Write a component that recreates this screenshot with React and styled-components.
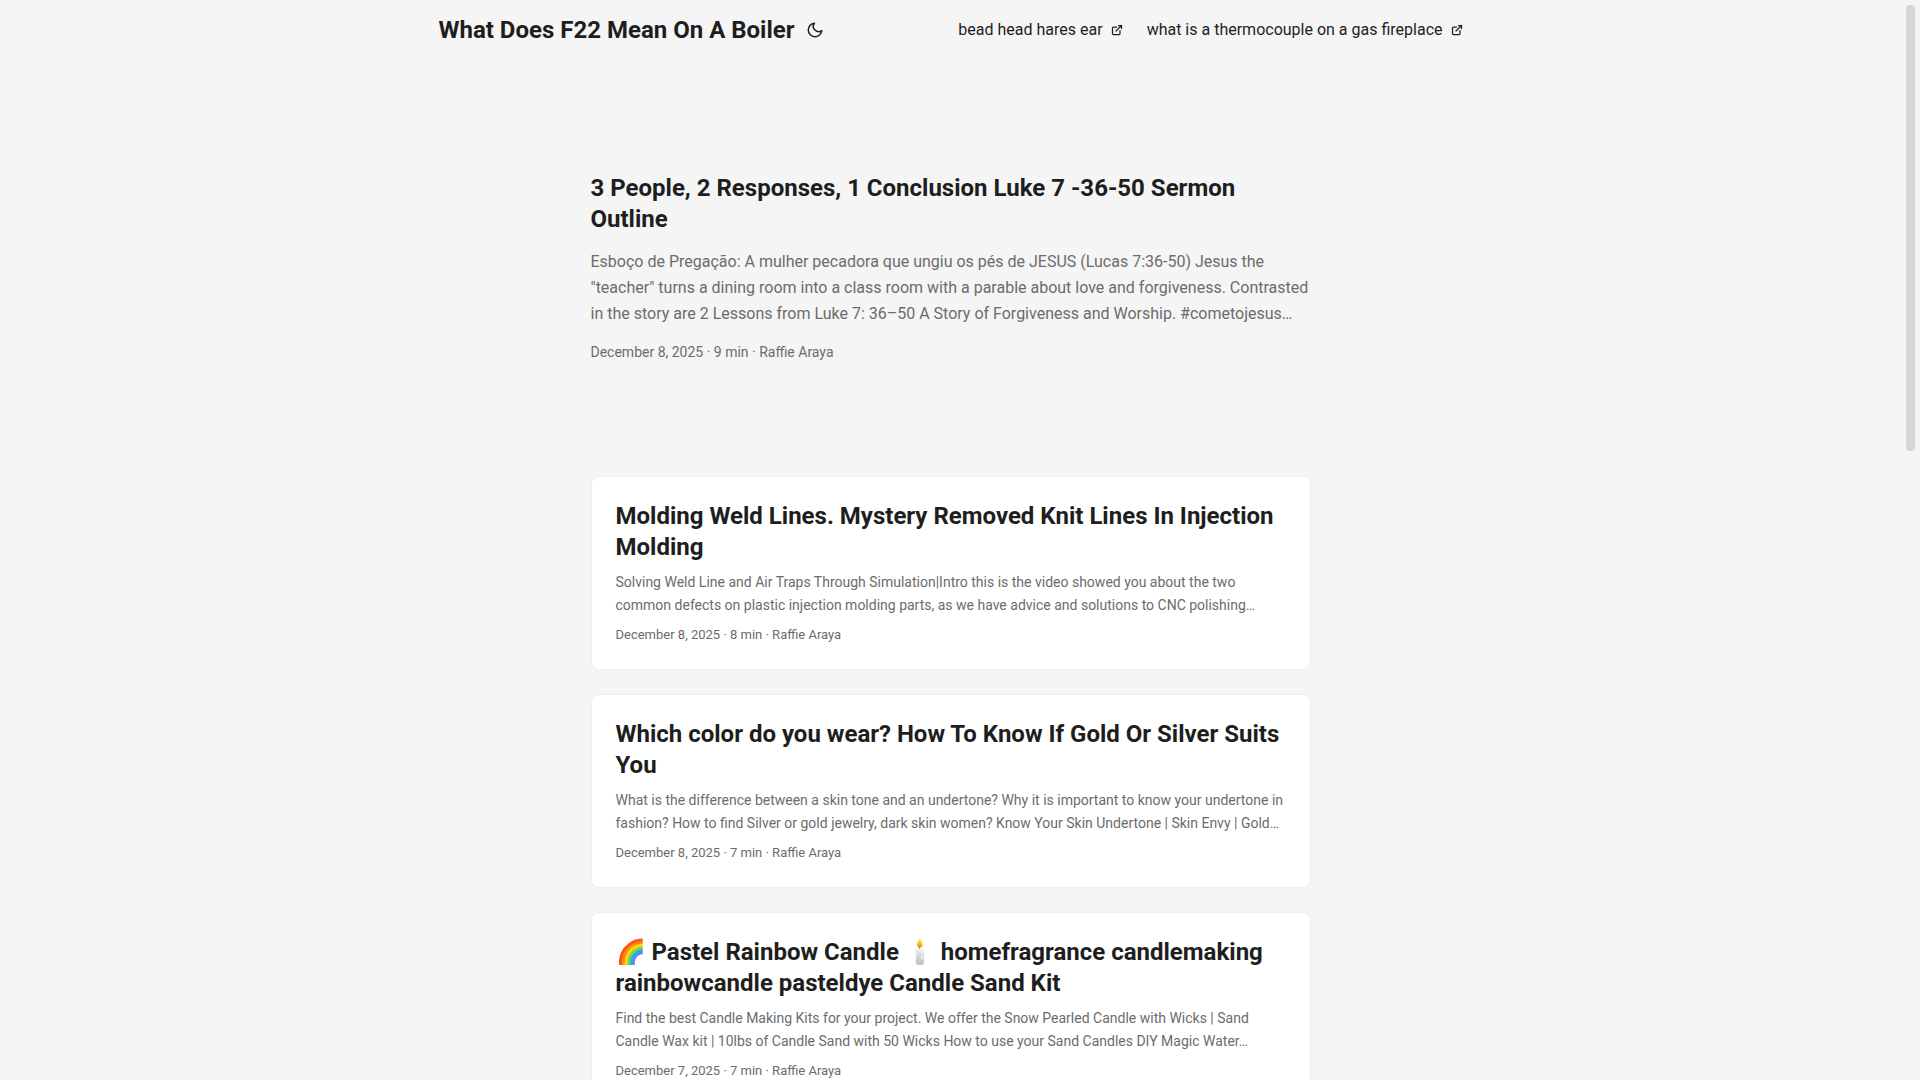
import React, { useState } from "react";
import styled, { createGlobalStyle } from "styled-components";

const menu = [
  { name: "bead head hares ear", url: "#bead-head-hares-ear" },
  {
    name: "what is a thermocouple on a gas fireplace",
    url: "#what-is-a-thermocouple",
  },
];

const featured = {
  title: "3 People, 2 Responses, 1 Conclusion Luke 7 -36-50 Sermon Outline",
  summary:
    'Esboço de Pregação: A mulher pecadora que ungiu os pés de JESUS (Lucas 7:36-50) Jesus the "teacher" turns a dining room into a class room with a parable about love and forgiveness. Contrasted in the story are 2 Lessons from Luke 7: 36–50 A Story of Forgiveness and Worship. #cometojesus…',
  meta: "December 8, 2025 · 9 min · Raffie Araya",
};

const posts = [
  {
    title:
      "Molding Weld Lines. Mystery Removed Knit Lines In Injection Molding",
    summary:
      "Solving Weld Line and Air Traps Through Simulation|Intro this is the video showed you about the two common defects on plastic injection molding parts, as we have advice and solutions to CNC polishing…",
    meta: "December 8, 2025 · 8 min · Raffie Araya",
  },
  {
    title: "Which color do you wear? How To Know If Gold Or Silver Suits You",
    summary:
      "What is the difference between a skin tone and an undertone? Why it is important to know your undertone in fashion? How to find Silver or gold jewelry, dark skin women? Know Your Skin Undertone | Skin Envy | Gold…",
    meta: "December 8, 2025 · 7 min · Raffie Araya",
  },
  {
    title:
      "🌈 Pastel Rainbow Candle 🕯️ homefragrance candlemaking rainbowcandle pasteldye Candle Sand Kit",
    summary:
      "Find the best Candle Making Kits for your project. We offer the Snow Pearled Candle with Wicks | Sand Candle Wax kit | 10lbs of Candle Sand with 50 Wicks How to use your Sand Candles DIY Magic Water…",
    meta: "December 7, 2025 · 7 min · Raffie Araya",
  },
];

const MoonIcon = () => (
  <svg
    width="24"
    height="18"
    viewBox="0 0 24 24"
    fill="none"
    stroke="currentColor"
    strokeWidth="2"
    strokeLinecap="round"
    strokeLinejoin="round"
  >
    <path d="M21 12.79A9 9 0 1 1 11.21 3 7 7 0 0 0 21 12.79z" />
  </svg>
);

const ExternalIcon = () => (
  <svg
    width="12"
    height="12"
    viewBox="0 0 24 24"
    fill="none"
    stroke="currentColor"
    strokeWidth="2.5"
    strokeLinecap="round"
    strokeLinejoin="round"
  >
    <path d="M18 13v6a2 2 0 01-2 2H5a2 2 0 01-2-2V8a2 2 0 012-2h6" />
    <path d="M15 3h6v6" />
    <path d="M10 14L21 3" />
  </svg>
);

const App = () => {
  const [dark, setDark] = useState(false);

  return (
    <>
      <GlobalStyle />
      <Page $dark={dark}>
        <Nav>
          <LogoWrap>
            <Logo href="#home">What Does F22 Mean On A Boiler</Logo>
            <ThemeToggle
              type="button"
              aria-label="Toggle theme"
              onClick={() => setDark(!dark)}
            >
              <MoonIcon />
            </ThemeToggle>
          </LogoWrap>
          <Menu>
            {menu.map((item) => (
              <li key={item.url}>
                <MenuLink href={item.url}>
                  {item.name}
                  <ExternalIcon />
                </MenuLink>
              </li>
            ))}
          </Menu>
        </Nav>
        <Main>
          <FirstEntry>
            <Title>
              <EntryLink href="#featured">{featured.title}</EntryLink>
            </Title>
            <Summary $large>{featured.summary}</Summary>
            <Meta $large>{featured.meta}</Meta>
          </FirstEntry>
          {posts.map((post, idx) => (
            <PostEntry key={idx}>
              <Title>
                <EntryLink href={`#post-${idx + 1}`}>{post.title}</EntryLink>
              </Title>
              <Summary>{post.summary}</Summary>
              <Meta>{post.meta}</Meta>
            </PostEntry>
          ))}
        </Main>
        <ScrollTrack aria-hidden="true">
          <ScrollThumb />
        </ScrollTrack>
      </Page>
    </>
  );
};

export default App;

const GlobalStyle = createGlobalStyle`
  *,
  *::before,
  *::after {
    box-sizing: border-box;
  }

  html {
    scrollbar-width: none;
  }

  body {
    margin: 0;
  }

  h2,
  p,
  ul {
    margin: 0;
    padding: 0;
  }
`;

const Page = styled.div`
  --bg: ${(props) => (props.$dark ? "#1d1e20" : "#f5f5f5")};
  --entry: ${(props) => (props.$dark ? "#2e2e33" : "#ffffff")};
  --primary: ${(props) => (props.$dark ? "#dadadb" : "#1e1e1e")};
  --secondary: ${(props) => (props.$dark ? "#9b9c9d" : "#6c6c6c")};
  --border: ${(props) => (props.$dark ? "#333333" : "#eeeeee")};
  --thumb: ${(props) => (props.$dark ? "#414244" : "#d6d6d6")};

  min-height: 100vh;
  padding-right: 19px;
  background: var(--bg);
  color: var(--primary);
  font-family: Roboto, "Open Sans", sans-serif;
  font-size: 16px;
`;

const Nav = styled.nav`
  display: flex;
  flex-wrap: wrap;
  justify-content: space-between;
  max-width: 1072px;
  margin: 0 auto;
  padding: 0 24px;
  line-height: 60px;
`;

const LogoWrap = styled.div`
  display: flex;
  align-items: center;
  gap: 8px;
`;

const Logo = styled.a`
  color: inherit;
  font-size: 24px;
  font-weight: 700;
  text-decoration: none;
`;

const ThemeToggle = styled.button`
  display: flex;
  padding: 0;
  border: 0;
  background: none;
  color: inherit;
  cursor: pointer;
`;

const Menu = styled.ul`
  display: flex;
  flex-wrap: wrap;
  gap: 0 24px;
  list-style: none;
`;

const MenuLink = styled.a`
  display: flex;
  align-items: center;
  gap: 8px;
  color: inherit;
  text-decoration: none;
`;

const Main = styled.main`
  max-width: 768px;
  margin: 0 auto;
  padding: 24px;
`;

const FirstEntry = styled.article`
  position: relative;
  display: flex;
  flex-direction: column;
  justify-content: center;
  min-height: 320px;
  margin: 24px 0 48px;
`;

const PostEntry = styled.article`
  position: relative;
  margin-bottom: 24px;
  padding: 24px;
  border: 1px solid var(--border);
  border-radius: 8px;
  background: var(--entry);
`;

const Title = styled.h2`
  font-size: 24px;
  font-weight: 700;
  line-height: 31px;
`;

const EntryLink = styled.a`
  color: inherit;
  text-decoration: none;

  &::after {
    content: "";
    position: absolute;
    inset: 0;
  }
`;

const Summary = styled.p`
  margin: ${(props) => (props.$large ? "14px 0" : "8px 0")};
  color: var(--secondary);
  font-size: ${(props) => (props.$large ? "16px" : "14px")};
  line-height: ${(props) => (props.$large ? "26px" : "23px")};
`;

const Meta = styled.footer`
  color: var(--secondary);
  font-size: ${(props) => (props.$large ? "14px" : "13px")};
  line-height: ${(props) => (props.$large ? "22px" : "20px")};
`;

const ScrollTrack = styled.div`
  position: fixed;
  top: 0;
  right: 0;
  bottom: 0;
  width: 19px;
  padding: 5px;
`;

const ScrollThumb = styled.div`
  height: 41.7%;
  border-radius: 4px;
  background: var(--thumb);
`;
